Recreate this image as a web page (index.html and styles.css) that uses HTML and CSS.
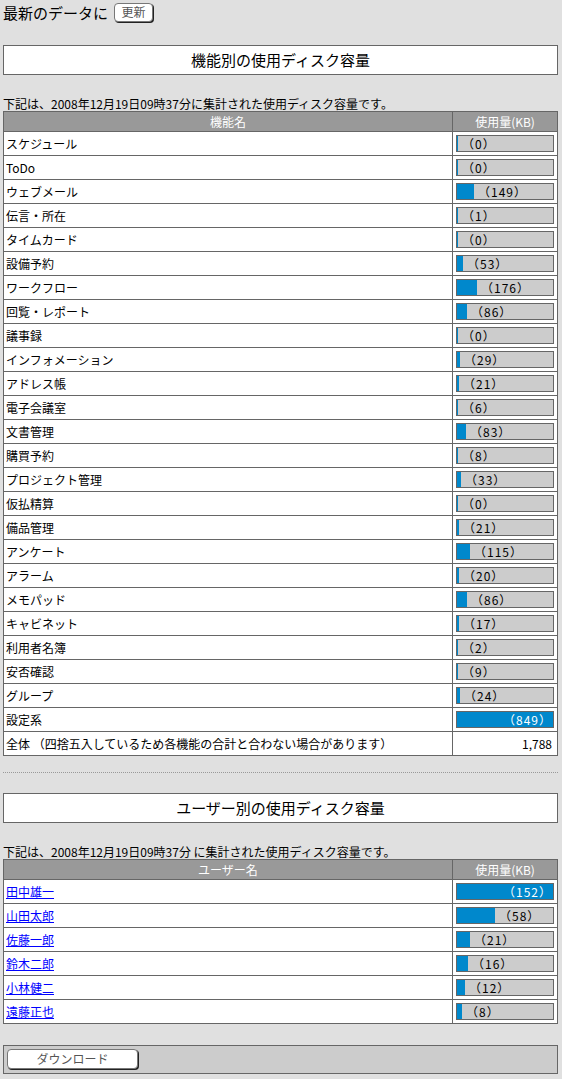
FILE: index.html
```html
<!DOCTYPE html>
<html lang="ja">
<head>
  <meta charset="UTF-8" />
  <title>使用ディスク容量</title>
  <link rel="stylesheet" href="styles.css">
</head>
<body>
<div class="page">

  <div class="refresh">
    <span>最新のデータに</span>
    <button class="btn btn-small">更新</button>
  </div>

  <div class="title">機能別の使用ディスク容量</div>
  <p class="caption">下記は、2008年12月19日09時37分に集計された使用ディスク容量です。</p>
  <table class="usage">
    <tr><th>機能名</th><th class="col-size">使用量(KB)</th></tr>
    <tr><td>スケジュール</td><td><div class="bar"><span class="fill" style="width:1px"></span><span class="val">（0）</span></div></td></tr>
    <tr><td>ToDo</td><td><div class="bar"><span class="fill" style="width:1px"></span><span class="val">（0）</span></div></td></tr>
    <tr><td>ウェブメール</td><td><div class="bar"><span class="fill" style="width:17px"></span><span class="val">（149）</span></div></td></tr>
    <tr><td>伝言・所在</td><td><div class="bar"><span class="fill" style="width:1px"></span><span class="val">（1）</span></div></td></tr>
    <tr><td>タイムカード</td><td><div class="bar"><span class="fill" style="width:1px"></span><span class="val">（0）</span></div></td></tr>
    <tr><td>設備予約</td><td><div class="bar"><span class="fill" style="width:6px"></span><span class="val">（53）</span></div></td></tr>
    <tr><td>ワークフロー</td><td><div class="bar"><span class="fill" style="width:20px"></span><span class="val">（176）</span></div></td></tr>
    <tr><td>回覧・レポート</td><td><div class="bar"><span class="fill" style="width:10px"></span><span class="val">（86）</span></div></td></tr>
    <tr><td>議事録</td><td><div class="bar"><span class="fill" style="width:1px"></span><span class="val">（0）</span></div></td></tr>
    <tr><td>インフォメーション</td><td><div class="bar"><span class="fill" style="width:3px"></span><span class="val">（29）</span></div></td></tr>
    <tr><td>アドレス帳</td><td><div class="bar"><span class="fill" style="width:2px"></span><span class="val">（21）</span></div></td></tr>
    <tr><td>電子会議室</td><td><div class="bar"><span class="fill" style="width:1px"></span><span class="val">（6）</span></div></td></tr>
    <tr><td>文書管理</td><td><div class="bar"><span class="fill" style="width:9px"></span><span class="val">（83）</span></div></td></tr>
    <tr><td>購買予約</td><td><div class="bar"><span class="fill" style="width:1px"></span><span class="val">（8）</span></div></td></tr>
    <tr><td>プロジェクト管理</td><td><div class="bar"><span class="fill" style="width:4px"></span><span class="val">（33）</span></div></td></tr>
    <tr><td>仮払精算</td><td><div class="bar"><span class="fill" style="width:1px"></span><span class="val">（0）</span></div></td></tr>
    <tr><td>備品管理</td><td><div class="bar"><span class="fill" style="width:2px"></span><span class="val">（21）</span></div></td></tr>
    <tr><td>アンケート</td><td><div class="bar"><span class="fill" style="width:13px"></span><span class="val">（115）</span></div></td></tr>
    <tr><td>アラーム</td><td><div class="bar"><span class="fill" style="width:2px"></span><span class="val">（20）</span></div></td></tr>
    <tr><td>メモパッド</td><td><div class="bar"><span class="fill" style="width:10px"></span><span class="val">（86）</span></div></td></tr>
    <tr><td>キャビネット</td><td><div class="bar"><span class="fill" style="width:2px"></span><span class="val">（17）</span></div></td></tr>
    <tr><td>利用者名簿</td><td><div class="bar"><span class="fill" style="width:1px"></span><span class="val">（2）</span></div></td></tr>
    <tr><td>安否確認</td><td><div class="bar"><span class="fill" style="width:1px"></span><span class="val">（9）</span></div></td></tr>
    <tr><td>グループ</td><td><div class="bar"><span class="fill" style="width:3px"></span><span class="val">（24）</span></div></td></tr>
    <tr><td>設定系</td><td><div class="bar"><span class="fill full"><span class="val">（849）</span></span></div></td></tr>
    <tr><td>全体 （四捨五入しているため各機能の合計と合わない場合があります）</td><td class="total">1,788</td></tr>
  </table>

  <hr class="sep">

  <div class="title">ユーザー別の使用ディスク容量</div>
  <p class="caption">下記は、2008年12月19日09時37分 に集計された使用ディスク容量です。</p>
  <table class="usage">
    <tr><th>ユーザー名</th><th class="col-size">使用量(KB)</th></tr>
    <tr><td><a href="#">田中雄一</a></td><td><div class="bar"><span class="fill full"><span class="val">（152）</span></span></div></td></tr>
    <tr><td><a href="#">山田太郎</a></td><td><div class="bar"><span class="fill" style="width:38px"></span><span class="val">（58）</span></div></td></tr>
    <tr><td><a href="#">佐藤一郎</a></td><td><div class="bar"><span class="fill" style="width:13px"></span><span class="val">（21）</span></div></td></tr>
    <tr><td><a href="#">鈴木二郎</a></td><td><div class="bar"><span class="fill" style="width:11px"></span><span class="val">（16）</span></div></td></tr>
    <tr><td><a href="#">小林健二</a></td><td><div class="bar"><span class="fill" style="width:8px"></span><span class="val">（12）</span></div></td></tr>
    <tr><td><a href="#">遠藤正也</a></td><td><div class="bar"><span class="fill" style="width:5px"></span><span class="val">（8）</span></div></td></tr>
  </table>

  <div class="footer">
    <button class="btn btn-wide">ダウンロード</button>
  </div>

</div>
</body>
</html>
```

FILE: styles.css
```css
body {
  margin: 0;
  background: #e0e0e0;
  font-family: "Noto Sans CJK JP", "DejaVu Sans", sans-serif;
  font-size: 12px;
  color: #000;
}

.page {
  width: 555px;
  margin-left: 3px;
}

.refresh {
  height: 24px;
  display: flex;
  align-items: center;
  gap: 6px;
  font-size: 15px;
}

.btn {
  font-family: inherit;
  font-size: 12px;
  background: #fff;
  border: 1px solid #777;
  border-radius: 4px;
  box-shadow: 1px 1px 0 #222;
  color: #555;
  padding: 0;
  line-height: 1;
}

.btn-small {
  width: 39px;
  height: 19px;
  margin-top: 0;
}

.btn-wide {
  width: 131px;
  height: 20px;
}

.title {
  margin-top: 21px;
  height: 28px;
  line-height: 28px;
  border: 1px solid #666;
  background: #fff;
  text-align: center;
  font-size: 15px;
}

.caption {
  margin: 21px 0 0;
  height: 15px;
  line-height: 15px;
  font-size: 12px;
}

.usage {
  width: 555px;
  border-collapse: collapse;
  background: #fff;
}

.usage th {
  background: #999;
  color: #fff;
  font-weight: normal;
  font-size: 12px;
  height: 19px;
  padding: 0;
  border: 1px solid #666;
  line-height: 18px;
}

.usage td {
  border: 1px solid #666;
  height: 23px;
  padding: 0 3px 0 2px;
  font-size: 12px;
  line-height: 14px;
}

.usage .col-size {
  width: 104px;
}

.usage a {
  color: #00f;
}

.usage .total {
  text-align: right;
  padding-right: 5px;
}

.bar {
  display: flex;
  width: 96px;
  height: 15px;
  margin-left: 1px;
  border: 1px solid #666;
  background: #ccc;
}

.fill {
  background: #0088cc;
  min-width: 1px;
}

.fill.full {
  flex: 1;
  text-align: right;
}

.val {
  padding-left: 4px;
  line-height: 15px;
  letter-spacing: 1px;
  white-space: nowrap;
}

.fill.full .val {
  color: #fff;
  padding-right: 1px;
}

.sep {
  margin: 16px 0 0;
  border: 0;
  border-top: 1px dotted #999;
  height: 0;
}

.sep + .title {
  margin-top: 20px;
}

.footer {
  margin-top: 21px;
  height: 21px;
  padding: 3px;
  border: 1px solid #666;
  background: #ccc;
}
```
